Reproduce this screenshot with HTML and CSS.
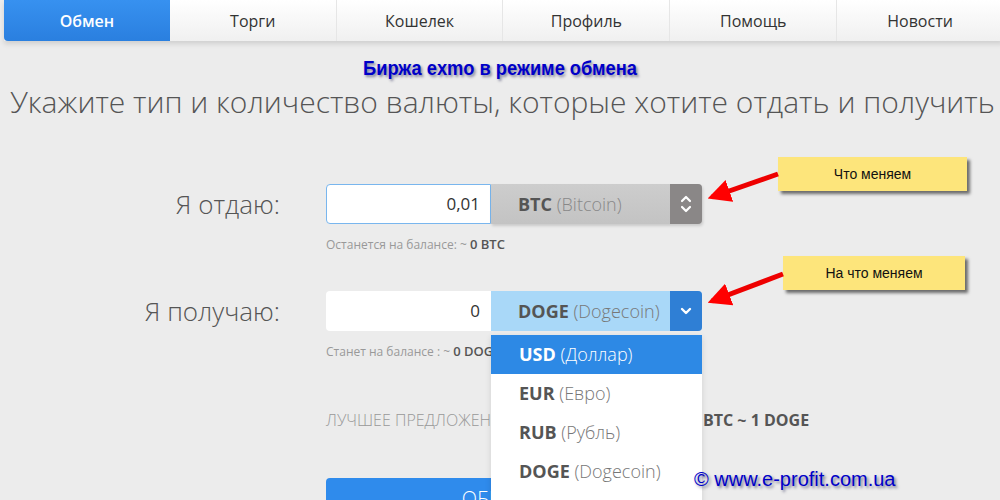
FILE: index.html
```html
<!DOCTYPE html>
<html lang="ru">
<head>
  <meta charset="UTF-8">
  <title>Обмен</title>
  <link rel="stylesheet" href="styles.css">
</head>
<body>
  <nav class="tabs">
    <a class="tab active">Обмен</a>
    <a class="tab">Торги</a>
    <a class="tab">Кошелек</a>
    <a class="tab">Профиль</a>
    <a class="tab">Помощь</a>
    <a class="tab">Новости</a>
  </nav>

  <div class="caption">Биржа exmo в режиме обмена</div>
  <h1>Укажите тип и количество валюты, которые хотите отдать и получить</h1>

  <div class="form">
    <!-- give -->
    <label class="lbl">Я отдаю:</label>
    <div class="group">
      <div class="amount focused">0,01</div>
      <div class="cur grey">
        <span class="cur-name"><b>BTC</b> (Bitcoin)</span>
        <span class="caret">
          <svg width="12" height="22" viewBox="0 0 12 22"><path d="M2 8 L6 4 L10 8 M2 14 L6 18 L10 14" fill="none" stroke="#fff" stroke-width="2.2" stroke-linecap="round" stroke-linejoin="round"/></svg>
        </span>
      </div>
    </div>
    <div></div>
    <div class="hint">Останется на балансе: ~ <b>0 BTC</b></div>

    <!-- get -->
    <label class="lbl second">Я получаю:</label>
    <div class="group second">
      <div class="amount">0</div>
      <div class="cur blue">
        <span class="cur-name"><b>DOGE</b> (Dogecoin)</span>
        <span class="caret">
          <svg width="12" height="10" viewBox="0 0 12 10"><path d="M2 3 L6 7 L10 3" fill="none" stroke="#fff" stroke-width="2.4" stroke-linecap="round" stroke-linejoin="round"/></svg>
        </span>
      </div>
      <ul class="menu">
        <li class="on"><b>USD</b> (Доллар)</li>
        <li><b>EUR</b> (Евро)</li>
        <li><b>RUB</b> (Рубль)</li>
        <li><b>DOGE</b> (Dogecoin)</li>
      </ul>
    </div>
    <div></div>
    <div class="hint">Станет на балансе : ~ <b>0 DOGE</b></div>

    <div></div>
    <div class="offer"><span class="offer-k">Лучшее предложение:</span><b>BTC ~ 1 DOGE</b></div>

    <div></div>
    <button class="go">Обменять</button>
  </div>

  <!-- annotations -->
  <div class="note note1">Что меняем</div>
  <div class="note note2">На что меняем</div>
  <svg class="arrows" width="1000" height="500" viewBox="0 0 1000 500">
    <defs>
      <marker id="head" viewBox="0 0 10 10" refX="8" refY="5" markerWidth="4.6" markerHeight="4.6" orient="auto">
        <path d="M0 0 L10 5 L0 10 z" fill="#f00"/>
      </marker>
    </defs>
    <line x1="778" y1="174" x2="712" y2="197" stroke="#e00" stroke-width="5" marker-end="url(#head)"/>
    <line x1="783" y1="274" x2="712" y2="301" stroke="#e00" stroke-width="5" marker-end="url(#head)"/>
  </svg>
  <div class="copy">© www.e-profit.com.ua</div>
</body>
</html>
```

FILE: styles.css
```css
body { margin: 0; background: #ececec; font-family: "Open Sans", sans-serif; color: #555; height: 500px; overflow: hidden; position: relative; }

.tabs { display: flex; margin-left: 4px; margin-right: -3px; height: 41px; box-shadow: 0 3px 5px rgba(0,0,0,0.12); }
.tab { flex: 1; display: flex; align-items: center; justify-content: center; font-size: 16px; color: #333; background: linear-gradient(#fff, #f0f0f0); border-left: 1px solid #e6e6e6; }
.tab:nth-child(2) { border-left: none; }
.tab.active { background: linear-gradient(#3791f0, #2a7fdf); color: #fff; font-weight: 600; border-radius: 0 0 0 4px; border-left: none; }

.caption { text-align: center; margin-top: 15px; height: 25px; font-family: "Liberation Sans", Arial, sans-serif; font-weight: bold; font-size: 21px; color: #0000c8; transform: scaleX(0.87); text-shadow: 2px 2px 3px rgba(0,0,60,0.45); }
h1 { margin: 1px 0 0; padding-left: 5px; text-align: center; font-weight: 300; font-size: 30px; color: #555; line-height: 40px; }

.form { display: grid; grid-template-columns: 280px 376px; column-gap: 46px; margin-top: 62px; }
.lbl { justify-self: end; align-self: center; font-size: 26px; font-weight: 300; color: #555; }
.group { display: flex; height: 40px; position: relative; }
.second { margin-top: 38px; }
.amount { width: 165px; box-sizing: border-box; background: #fff; border-radius: 4px 0 0 4px; text-align: right; padding-right: 11px; line-height: 40px; font-size: 17px; color: #333; }
.amount.focused { border: 1px solid #79b6ee; line-height: 38px; padding-right: 10px; }
.cur { flex: 1; display: flex; border-radius: 0 4px 4px 0; overflow: hidden; font-size: 18px; }
.cur-name { flex: 1; padding-left: 27px; line-height: 40px; color: #888; font-weight: 300; white-space: nowrap; }
.cur-name b { color: #555; font-weight: 700; }
.caret { width: 32px; display: flex; align-items: center; justify-content: center; }
.grey { background: linear-gradient(#cdcdcd, #c3c3c3); box-shadow: 1px 2px 3px rgba(0,0,0,0.15); }
.grey .caret { background: #8a8787; }
.blue { background: #a9d8f8; }
.blue .cur-name { color: #777; }
.blue .caret { background: #2f7fd5; }

.hint { font-size: 12px; color: #999; margin-top: 11px; }
.hint b { color: #555; font-weight: 600; font-size: 13px; }

.menu { position: absolute; left: 165px; top: 44px; width: 211px; margin: 0; padding: 0 0 30px; list-style: none; background: #fff; z-index: 2; box-shadow: 0 2px 6px rgba(0,0,0,0.12); }
.menu li { height: 39px; line-height: 39px; padding-left: 28px; font-size: 18px; font-weight: 300; color: #777; white-space: nowrap; }
.menu li b { color: #555; font-weight: 700; }
.menu li.on { background: #2d89e5; color: #fff; }
.menu li.on b { color: #fff; }

.offer { display: flex; align-items: baseline; margin-top: 49px; font-size: 16px; font-weight: 300; color: #999; text-transform: uppercase; white-space: nowrap; }
.offer-k { width: 377px; flex-shrink: 0; }
.offer b { color: #555; font-weight: 700; font-size: 16px; }

.go { margin-top: 47px; height: 40px; border: none; border-radius: 4px; background: #2f8bec; color: #fff; font-family: "Open Sans", sans-serif; font-size: 20px; text-transform: uppercase; font-weight: 300; }

.note { position: absolute; z-index: 3; background: #fde57b; font-family: "Liberation Sans", Arial, sans-serif; font-size: 14px; color: #111; text-align: center; line-height: 34px; height: 34px; box-shadow: 3px 3px 3px rgba(0,0,0,0.55); }
.note1 { left: 778px; top: 157px; width: 189px; }
.note2 { left: 783px; top: 256px; width: 182px; }
.arrows { position: absolute; left: 0; top: 0; z-index: 4; pointer-events: none; }
.copy { position: absolute; z-index: 5; left: 694px; top: 468px; font-family: "Liberation Sans", Arial, sans-serif; font-size: 20px; color: #0000c8; text-shadow: 2px 2px 3px rgba(0,0,60,0.5); }
```
